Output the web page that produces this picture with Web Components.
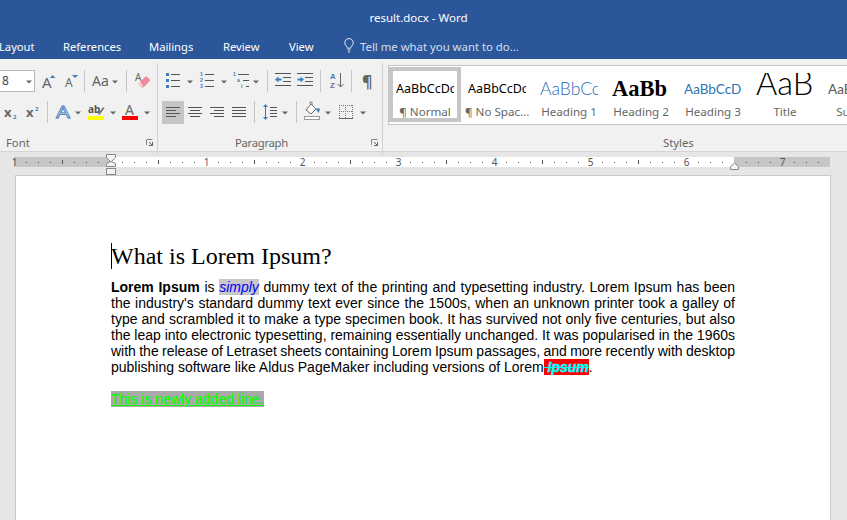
<!DOCTYPE html>
<html><head><meta charset="utf-8"><title>result.docx - Word</title>
<style>html,body{margin:0;padding:0;background:#e6e6e6;overflow:hidden}</style></head>
<body>
<word-app>
  <title-bar>result.docx - Word</title-bar>
  <tab-row>
    <tab-item style="margin-left:-1px;width:35px">Layout</tab-item>
    <tab-item style="margin-left:29px;width:57px">References</tab-item>
    <tab-item style="margin-left:29px;width:45px">Mailings</tab-item>
    <tab-item style="margin-left:29px;width:37px">Review</tab-item>
    <tab-item style="margin-left:29px;width:25px">View</tab-item>
    <rb-icon n="bulb" style="margin-left:29px"></rb-icon>
    <tab-item tell style="margin-left:5px;width:170px">Tell me what you want to do...</tab-item>
  </tab-row>
  <ribbon-bar>
    <ribbon-group label="Font" launcher style="width:157px">
      <rb-row slot="r1">
        <size-box style="margin-left:-10px">8</size-box>
        <rb-icon n="grow" style="margin-left:7px"></rb-icon>
        <rb-icon n="shrink" style="margin-left:9px"></rb-icon>
        <rb-sep style="margin-left:6px"></rb-sep>
        <rb-icon n="case" style="margin-left:7px"></rb-icon>
        <rb-icon n="caret" style="margin-left:4px"></rb-icon>
        <rb-sep style="margin-left:8px"></rb-sep>
        <rb-icon n="eraser" style="margin-left:8px"></rb-icon>
      </rb-row>
      <rb-row slot="r2">
        <rb-icon n="sub" style="margin-left:4px"></rb-icon>
        <rb-icon n="sup" style="margin-left:9px"></rb-icon>
        <rb-sep style="margin-left:8px"></rb-sep>
        <rb-icon n="fx" style="margin-left:8px"></rb-icon>
        <rb-icon n="caret" style="margin-left:5px"></rb-icon>
        <rb-icon n="hilite" style="margin-left:7px"></rb-icon>
        <rb-icon n="caret" style="margin-left:6px"></rb-icon>
        <rb-icon n="fcolor" style="margin-left:6px"></rb-icon>
        <rb-icon n="caret" style="margin-left:6px"></rb-icon>
      </rb-row>
    </ribbon-group>
    <ribbon-group label="Paragraph" launcher style="width:224px">
      <rb-row slot="r1">
        <rb-icon n="bullets" style="margin-left:8px"></rb-icon>
        <rb-icon n="caret" style="margin-left:7px"></rb-icon>
        <rb-icon n="numbers" style="margin-left:7px"></rb-icon>
        <rb-icon n="caret" style="margin-left:7px"></rb-icon>
        <rb-icon n="multi" style="margin-left:6px"></rb-icon>
        <rb-icon n="caret" style="margin-left:4px"></rb-icon>
        <rb-sep style="margin-left:8px"></rb-sep>
        <rb-icon n="outdent" style="margin-left:7px"></rb-icon>
        <rb-icon n="indent" style="margin-left:6px"></rb-icon>
        <rb-sep style="margin-left:7px"></rb-sep>
        <rb-icon n="sort" style="margin-left:9px"></rb-icon>
        <rb-sep style="margin-left:6px"></rb-sep>
        <rb-icon n="pilcrow" style="margin-left:10px"></rb-icon>
      </rb-row>
      <rb-row slot="r2">
        <rb-icon n="left" selected style="margin-left:4px"></rb-icon>
        <rb-icon n="center"></rb-icon>
        <rb-icon n="right"></rb-icon>
        <rb-icon n="justify"></rb-icon>
        <rb-sep style="margin-left:4px"></rb-sep>
        <rb-icon n="spacing" style="margin-left:8px"></rb-icon>
        <rb-icon n="caret" style="margin-left:5px"></rb-icon>
        <rb-sep style="margin-left:8px"></rb-sep>
        <rb-icon n="shade" style="margin-left:7px"></rb-icon>
        <rb-icon n="caret" style="margin-left:5px"></rb-icon>
        <rb-icon n="borders" style="margin-left:8px"></rb-icon>
        <rb-icon n="caret" style="margin-left:7px"></rb-icon>
      </rb-row>
    </ribbon-group>
    <style-gallery label="Styles">
      <style-item label="¶ Normal" selected><span style="font:12.5px 'Noto Sans',sans-serif;color:#000">AaBbCcDc</span></style-item>
      <style-item label="¶ No Spac..."><span style="font:12.5px 'Noto Sans',sans-serif;color:#000">AaBbCcDc</span></style-item>
      <style-item label="Heading 1"><span style="font:300 17.5px Lato,sans-serif;color:#1f6bb5">AaBbCc</span></style-item>
      <style-item label="Heading 2"><span style="font:bold 22.5px 'Liberation Serif',serif;color:#000">AaBb</span></style-item>
      <style-item label="Heading 3"><span style="font:13.5px Lato,sans-serif;color:#2e74b5">AaBbCcD</span></style-item>
      <style-item label="Title"><span style="display:inline-block;margin-top:-12px;font:300 32.5px Lato,sans-serif;color:#000">AaB</span></style-item>
      <style-item label="Subtitle"><span style="font:13.5px Lato,sans-serif;color:#5a5a5a">AaBbCcD</span></style-item>
    </style-gallery>
  </ribbon-bar>
  <doc-ruler></doc-ruler>
  <doc-page>
    <doc-heading>What is Lorem Ipsum?</doc-heading>
    <doc-para>
      <doc-line><b>Lorem Ipsum</b> is <mark-run style="background:#c8c8c8;color:#0000ff;font-style:italic">simply</mark-run> dummy text of the printing and typesetting industry. Lorem Ipsum has been</doc-line>
      <doc-line>the industry's standard dummy text ever since the 1500s, when an unknown printer took a galley of</doc-line>
      <doc-line>type and scrambled it to make a type specimen book. It has survived not only five centuries, but also</doc-line>
      <doc-line style="word-spacing:-1px">the leap into electronic typesetting, remaining essentially unchanged. It was popularised in the 1960s</doc-line>
      <doc-line style="word-spacing:-1px">with the release of Letraset sheets containing Lorem Ipsum passages, and more recently with desktop</doc-line>
      <doc-line last>publishing software like Aldus PageMaker including versions of Lorem<mark-run style="background:#ff0000;color:#00ffff;font-weight:bold;font-style:italic;text-decoration:line-through;-webkit-text-stroke:.5px #00ffff"> Ipsum</mark-run>.</doc-line>
    </doc-para>
    <doc-para>
      <doc-line last><mark-run style="background:#a9a9a9;color:#00ff00;text-decoration:underline;-webkit-text-stroke:.2px #00ff00">This is newly added line.</mark-run></doc-line>
    </doc-para>
  </doc-page>
</word-app>
<script>
const G='#666',B='#3f7cbc';
const UI="'Noto Sans',sans-serif";
const L=(x1,y,x2,c=G)=>`<path d="M${x1} ${y}.5H${x2}" stroke="${c}"/>`;
const T=(x,y,s,t,c=G,e='')=>`<text x="${x}" y="${y}" font-size="${s}" fill="${c}" font-family="'Noto Sans',sans-serif" ${e}>${t}</text>`;
const S=(x,y,s,t,c=B)=>`<text x="${x}" y="${y}" font-size="${s}" fill="${c}" font-weight="bold" font-family="'Liberation Sans',sans-serif">${t}</text>`;
const lines=(spec)=>spec.map(([a,y,b])=>L(a,y,b,'#555')).join('');
const ICONS={
 caret:[6,`<path d="M0 10.5h6L3 13.5z" fill="${G}"/>`],
 bulb:[12,`<path d="M6 1.5a4.3 4.3 0 0 0-2.6 7.7c.6.5.9 1.2.9 2h3.4c0-.8.3-1.5.9-2A4.3 4.3 0 0 0 6 1.5z" fill="none" stroke="#dfe7f3"/><path d="M4.5 13h3M5 15h2" stroke="#dfe7f3"/>`,16],
 grow:[14,T(0,18,15,'A')+`<path d="M8 8l2.5-3L13.500 8z" fill="${B}"/>`],
 shrink:[13,T(0,17,12,'A')+`<path d="M7 5h6l-3 3z" fill="${B}"/>`],
 case:[16,T(0,16,14,'Aa')],
 eraser:[16,T(0,11,10,'A')+`<path d="M3 14l8-8 4.500 4-7 7.500H6z" fill="#ee8a9c"/><path d="M3 14l3 3.500h2.500l-3-5.500z" fill="#f8d5db"/>`],
 sub:[13,T(0,16,13,'x',G,'font-weight="bold"')+T(9,18,6,'2',B,'font-weight="bold"')],
 sup:[13,T(0,16,13,'x',G,'font-weight="bold"')+T(9,10,6,'2',B,'font-weight="bold"')],
 fx:[14,T(0,17,17,'A','#fff',`stroke="${B}" stroke-width=".8" textLength="14" lengthAdjust="spacingAndGlyphs"`)],
 hilite:[16,T(0,12,10,'ab','#555','font-weight="bold"')+`<path d="M10 13l5-7 1.500 1-5 7z" fill="#777"/><rect y="15" width="16" height="4" fill="#ffff00"/>`],
 fcolor:[16,T(3,14,14,'A','#666')+`<rect y="15" width="16" height="4" fill="#ff0000"/>`],
 bullets:[14,`<rect x="0" y="3" width="3" height="3" fill="${B}"/><rect x="0" y="9" width="3" height="3" fill="${B}"/><rect x="0" y="15" width="3" height="3" fill="${B}"/>`+lines([[5,4,14],[5,10,14],[5,16,14]])],
 numbers:[14,S(0,6,5.2,'1')+S(0,12,5.2,'2')+S(0,18,5.2,'3')+lines([[5,4,14],[5,10,14],[5,16,14]])],
 multi:[16,S(0,6,5.2,'1')+S(4,12,5.2,'a')+S(8,18,5.2,'i')+lines([[5,4,16],[10,10,16],[13,16,16]])],
 outdent:[16,lines([[0,3,16],[8,7,16],[8,11,16],[0,15,16]])+`<path d="M0 9.500l3.500-3v2h3v2h-3v2z" fill="${B}"/>`],
 indent:[16,lines([[0,3,16],[8,7,16],[8,11,16],[0,15,16]])+`<path d="M7 9.500l-3.500-3v2h-3v2h3v2z" fill="${B}"/>`],
 sort:[15,S(0,9,7.800,'A')+S(0,18,7.800,'Z','#8064a2')+`<path d="M10.500 3v14M7.500 14l3 3 3-3" fill="none" stroke="${G}"/>`],
 pilcrow:[10,T(0,17,16,'¶',G,'font-weight="bold"')],
 left:[22,lines([[4,6,18],[4,9,14],[4,12,18],[4,15,14]]),23],
 center:[22,lines([[4,6,18],[6,9,16],[4,12,18],[6,15,16]]),23],
 right:[22,lines([[4,6,18],[8,9,18],[4,12,18],[8,15,18]]),23],
 justify:[22,lines([[4,6,18],[4,9,18],[4,12,18],[4,15,18]]),23],
 spacing:[14,`<path d="M2.500 4v14" stroke="${B}"/><path d="M0 6l2.500-3 2.500 3zM0 16l2.500 3 2.500-3z" fill="${B}"/>`+lines([[7,6,14],[7,9,14],[7,12,14],[7,15,14]]),23],
 shade:[16,`<path d="M2 9l5-6 5 5-5 5z" fill="#fff" stroke="#666"/><path d="M6 3V1h2v3" fill="none" stroke="#888"/><path d="M12 8c1-1 3-1 4 0l-1.500 4z" fill="${B}"/><rect x=".5" y="15.500" width="15" height="3" fill="#fff" stroke="#999"/>`,23],
 borders:[14,`<path d="M.5 4v13M6.500 4v13M13.500 4v13M0 4.500h14M0 10.500h14" stroke="#777" stroke-dasharray="1 1" fill="none"/><path d="M0 17.500h14" stroke="#666"/>`,23],
};
const def=(n,f)=>customElements.define(n,f);
const el=(css,html)=>class extends HTMLElement{constructor(){super();this.attachShadow({mode:'open'}).innerHTML=`<style>${css}</style>${html}`;}};
def('word-app',el(`:host{display:flex;flex-direction:column;width:847px;height:520px;overflow:hidden;background:#e6e6e6;position:relative}`,`<slot></slot>`));
def('title-bar',el(`:host{display:flex;justify-content:center;align-items:center;height:35px;background:#2b579a;color:#fff;font:11.5px ${UI};box-sizing:content-box;padding:0 10px 2px 0;flex:none}`,`<slot></slot>`));
def('tab-row',el(`:host{display:flex;align-items:flex-start;height:22px;background:#2b579a;flex:none}`,`<slot></slot>`));
def('tab-item',el(`:host{display:block;flex:none;white-space:nowrap;color:#fff;font:11.2px ${UI};line-height:20px}:host([tell]){color:#d4dfef;font-size:11.35px}`,`<slot></slot>`));
def('ribbon-bar',el(`:host{display:flex;height:93px;background:#f1f1f1;border-bottom:1px solid #d4d4d4;box-sizing:border-box;flex:none}`,`<slot></slot>`));
class RibbonGroup extends HTMLElement{constructor(){super();const s=this.attachShadow({mode:'open'});
 const lab=this.getAttribute('label');
 s.innerHTML=`<style>:host{display:flex;flex-direction:column;flex:none;box-sizing:content-box;border-right:1px solid #d0d0d0;height:84px;padding-top:7px;margin:4px 0}
 .rows{display:flex;flex-direction:column;gap:9px}
 ::slotted([slot=r1]){height:22px}::slotted([slot=r2]){height:23px}
 .foot{position:relative;display:flex;justify-content:center;align-items:center;margin-top:10px;font:11.3px ${UI};color:#666;height:16px;padding-right:17px}
 .foot.narrow{letter-spacing:-.3px}
 .foot.font{justify-content:flex-start;padding-left:6px;padding-right:0}
 svg{position:absolute;right:4px;top:5px}</style>
 <div class="rows"><slot name="r1"></slot><slot name="r2"></slot></div>
 <div class="foot ${lab==='Font'?'font':'narrow'}">${lab}<svg width="7" height="7"><path d="M.5 6V.5H6.500" fill="none" stroke="#888"/><path d="M3 3l3.500 3.500M6.500 3v3.500H3" fill="none" stroke="#666"/></svg></div>`;}}
def('ribbon-group',RibbonGroup);
def('rb-row',el(`:host{display:flex;align-items:flex-start}`,`<slot></slot>`));
def('rb-sep',el(`:host{display:block;flex:none;width:1px;height:22px;background:#c6c6c6}`,``));
def('size-box',el(`:host{display:block;flex:none;position:relative;box-sizing:border-box;width:45px;height:22px;background:#fff;border:1px solid #b8b8b8;padding-left:11px;font:12px/20px ${UI};color:#444}
 svg{position:absolute;left:35px;top:0}`,`<slot></slot><svg width="6" height="20"><path d="M0 9.500h6L3 12.500z" fill="#666"/></svg>`));
class RbIcon extends HTMLElement{constructor(){super();const [w,svg,h]=ICONS[this.getAttribute('n')];const H=h||22;
 this.attachShadow({mode:'open'}).innerHTML=`<style>:host{display:block;flex:none;width:${w}px;height:${H}px}:host([selected]){background:#c6c6c6}svg{display:block;overflow:visible}</style><svg width="${w}" height="${H}" viewBox="0 0 ${w} ${H}">${svg}</svg>`;}}
def('rb-icon',RbIcon);
class StyleGallery extends HTMLElement{constructor(){super();
 this.attachShadow({mode:'open'}).innerHTML=`<style>:host{display:flex;flex-direction:column;flex:none;width:459px;margin-left:5px;overflow:hidden}
 .box{display:flex;box-sizing:border-box;width:470px;height:60px;margin-top:6px;background:#fff;border:1px solid #c6c6c6;border-right:none;padding-top:1px;overflow:hidden}
 .lab{font:11.3px/16px ${UI};color:#666;margin:10px 0 0 275px}</style>
 <div class="box"><slot></slot></div><div class="lab">${this.getAttribute('label')}</div>`;}}
def('style-gallery',StyleGallery);
class StyleItem extends HTMLElement{constructor(){super();
 this.attachShadow({mode:'open'}).innerHTML=`<style>:host{display:flex;flex-direction:column;flex:none;box-sizing:border-box;width:72px;height:55px;border:4px solid transparent;align-items:stretch}
 :host([selected]){border-color:#c6c6c6}
 .p{height:31px;margin:2px 3px 0;overflow:hidden;white-space:nowrap;display:flex;align-items:center;width:58px}
 .l{font:11.6px/16px ${UI};color:#666;text-align:center;white-space:nowrap;height:14px}</style>
 <div class="p"><slot></slot></div><div class="l">${this.getAttribute('label')}</div>`;}}
def('style-item',StyleItem);
class DocRuler extends HTMLElement{constructor(){super();
 let s='';
 for(let x=14+12;x<830;x+=12){ const k=(x-14)/12;
   if(k%8===0) continue;
   if(x===110||x===734) continue;
   s+= k%4===0?`<path d="M${x}.5 8v4" stroke="#555"/>`:`<rect x="${x}" y="10" width="1" height="1" fill="#555"/>`;}
 const nums=[[14,'1'],[206,'1'],[302,'2'],[398,'3'],[494,'4'],[590,'5'],[686,'6'],[782,'7']];
 s+=nums.map(([x,t])=>`<text x="${x+.5}" y="14" text-anchor="middle" font-size="10" fill="#555" font-family="'Noto Sans',sans-serif">${t}</text>`).join('');
 this.attachShadow({mode:'open'}).innerHTML=`<style>:host{display:block;flex:none;height:24px}svg{display:block}</style>
 <svg width="847" height="24"><rect x="14" y="5" width="816" height="10" fill="#c6c6c6"/><rect x="110" y="5" width="624" height="10" fill="#fff"/>${s}
 <path d="M106.500 2.500h9v3l-4.500 4.500-4.500-4.500z" fill="#f4f4f4" stroke="#888"/><path d="M106.500 14.500v-3l4.500-2 4.500 2v3z" fill="#f4f4f4" stroke="#888"/><rect x="106.500" y="16.500" width="9" height="6" fill="#f4f4f4" stroke="#888"/>
 <path d="M730.500 17.500v-3l4-3.500 4 3.500v3z" fill="#f4f4f4" stroke="#888"/></svg>`;}}
def('doc-ruler',DocRuler);
def('doc-page',el(`:host{display:block;flex:1;box-sizing:border-box;margin:0 17px 0 16px;background:#fff;box-shadow:0 0 0 1px #c9c9c9;padding:67px 95px 0 95px}`,`<slot></slot>`));
def('doc-heading',el(`:host{display:block;position:relative;font:24px/27px 'Liberation Serif',serif;color:#000;margin-bottom:9px}
 i{position:absolute;left:0;top:0;width:1px;height:26px;background:#000}`,`<i></i><slot></slot>`));
def('doc-para',el(`:host{display:block;font:14px/16px 'Liberation Sans',sans-serif;color:#000;margin-bottom:16px}`,`<slot></slot>`));
def('doc-line',el(`:host{display:block;height:16px;text-align:justify;text-align-last:justify}:host([last]){text-align-last:left}`,`<slot></slot>`));
def('mark-run',el(`:host{display:inline}`,`<slot></slot>`));
</script>
</body></html>
